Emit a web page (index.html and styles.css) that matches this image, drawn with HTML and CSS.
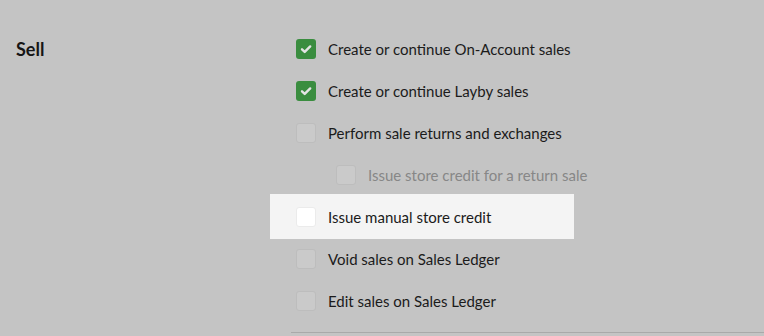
FILE: index.html
```html
<!DOCTYPE html>
<html>
<head>
<meta charset="utf-8">
<link rel="stylesheet" href="styles.css">
</head>
<body>
<div class="section">
  <h2 class="section-title">Sell</h2>
  <div class="options">
    <ul class="list">
      <li class="row"><span class="box checked"><svg viewBox="0 0 20 20" width="20" height="20"><path d="M6 10.3l2.7 2.6L14.2 7.4" fill="none" stroke="#e4e4e4" stroke-width="2.4" stroke-linecap="round" stroke-linejoin="round"/></svg></span><span class="label">Create or continue On-Account sales</span></li>
      <li class="row"><span class="box checked"><svg viewBox="0 0 20 20" width="20" height="20"><path d="M6 10.3l2.7 2.6L14.2 7.4" fill="none" stroke="#e4e4e4" stroke-width="2.4" stroke-linecap="round" stroke-linejoin="round"/></svg></span><span class="label">Create or continue Layby sales</span></li>
      <li class="row"><span class="box"></span><span class="label">Perform sale returns and exchanges</span></li>
      <li class="row sub disabled"><span class="box"></span><span class="label">Issue store credit for a return sale</span></li>
      <li class="row active"><span class="box"></span><span class="label">Issue manual store credit</span></li>
      <li class="row"><span class="box"></span><span class="label">Void sales on Sales Ledger</span></li>
      <li class="row"><span class="box"></span><span class="label">Edit sales on Sales Ledger</span></li>
    </ul>
    <div class="divider"></div>
  </div>
</div>
</body>
</html>
```
FILE: styles.css
```css
html, body {
  margin: 0;
  padding: 0;
  background: #c4c4c4;
  font-family: Lato, "Noto Sans", sans-serif;
  color: #1b1b1b;
  overflow: hidden;
}
.section {
  display: flex;
  padding-top: 28px;
}
.section-title {
  width: 254px;
  margin: 0;
  padding-left: 16px;
  font-size: 18px;
  font-weight: 700;
  line-height: 42px;
  color: #151515;
}
.options {
  flex: 1;
}
.list {
  list-style: none;
  margin: 0;
  padding: 0;
  width: 304px;
}
.row {
  display: flex;
  align-items: center;
  gap: 12px;
  height: 42px;
  padding-left: 26px;
  font-size: 15px;
  white-space: nowrap;
}
.row.sub {
  padding-left: 66px;
}
.row.disabled .label {
  color: #878787;
}
.row.active {
  background: #f4f4f4;
  height: 45px;
  margin: -2px 0 -1px;
}
.box {
  width: 20px;
  height: 20px;
  box-sizing: border-box;
  border-radius: 3px;
  border: 1px solid #bdbdbd;
  background: #cacaca;
  flex: none;
  display: flex;
}
.box.checked {
  background: #3a8d3f;
  border: none;
}
.row.active .box {
  background: #ffffff;
  border-color: #ebebeb;
}
.divider {
  height: 1px;
  background: #a9a9a9;
  margin-top: 10px;
  margin-left: 21px;
}
```
